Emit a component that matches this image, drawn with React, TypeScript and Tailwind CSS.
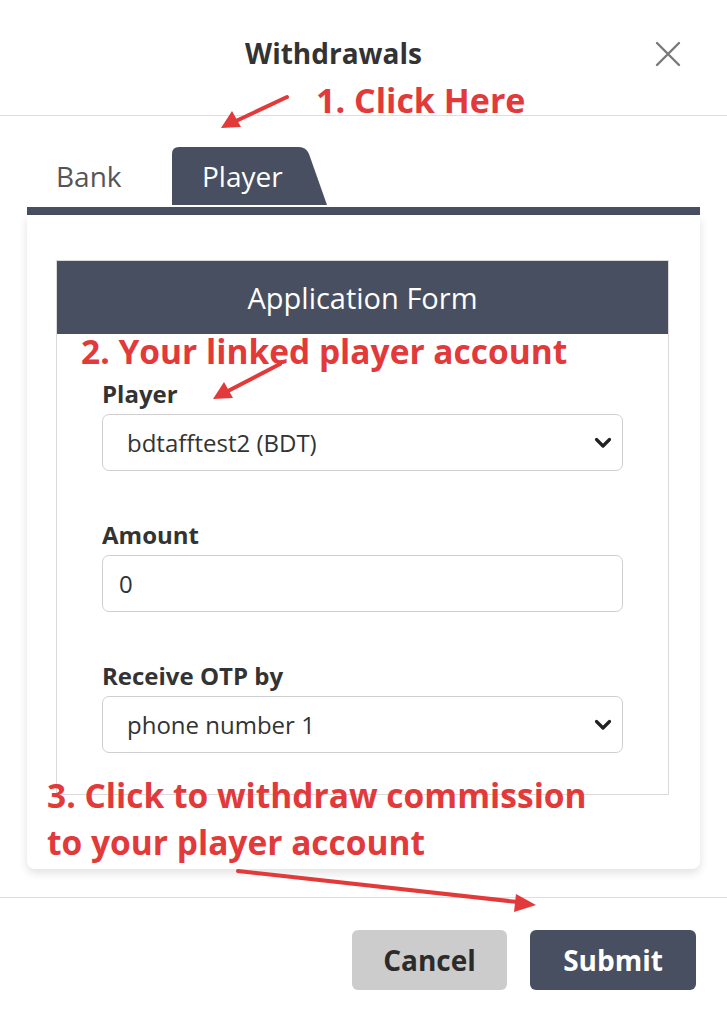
import React from 'react';

const RED = '#e23a3a';

const Chevron = () => (
  <svg width="18" height="12" viewBox="0 0 18 12" className="shrink-0">
    <path d="M2.5 2.5 L9 9 L15.5 2.5" fill="none" stroke="#222" strokeWidth="3.2" strokeLinecap="round" strokeLinejoin="round" />
  </svg>
);

const Field: React.FC<{ label: string; value: string; select?: boolean; pad?: string }> = ({ label, value, select, pad = 'pl-[24px]' }) => (
  <div className="flex flex-col">
    <label className="text-[24px] font-bold text-[#333] leading-[28px]">{label}</label>
    <div className={`mt-[6px] h-[57px] rounded-[7px] border border-[#cfcfcf] flex items-center justify-between pr-[10px] ${pad}`}>
      <span className="text-[24px] text-[#333]">{value}</span>
      {select && <Chevron />}
    </div>
  </div>
);

const Arrows = () => (
  <svg className="absolute inset-0 pointer-events-none" width="727" height="1024" viewBox="0 0 727 1024">
    <g stroke={RED} strokeWidth="4" strokeLinecap="round" fill={RED}>
      <line x1="287" y1="97" x2="236" y2="121" />
      <polygon points="221,128 232,111 241,127" stroke="none" />
      <line x1="280" y1="364" x2="228" y2="391" />
      <polygon points="213,399 224,382 233,398" stroke="none" />
      <line x1="238" y1="871" x2="518" y2="902" />
      <polygon points="536,905 516,894 514,912" stroke="none" />
    </g>
  </svg>
);

export default function App() {
  return (
    <div className="relative w-[727px] h-[1024px] bg-white overflow-hidden font-['Open_Sans',sans-serif] text-[#333]">
      {/* header */}
      <div className="relative h-[116px] border-b border-[#dedede] flex items-start justify-center pt-[34px] pr-[60px]">
        <h1 className="text-[28px] font-bold text-[#333] leading-[38px]">Withdrawals</h1>
        <button className="absolute right-[46px] top-[41px] text-[#777]">
          <svg width="26" height="26" viewBox="0 0 26 26">
            <path d="M2 2 L24 24 M24 2 L2 24" stroke="#7a7a7a" strokeWidth="2.4" strokeLinecap="round" />
          </svg>
        </button>
      </div>

      {/* tabs */}
      <div className="mx-[27px] mt-[31px]">
        <div className="flex items-end h-[58px]">
          <div className="w-[145px] h-full flex items-center pl-[29px] text-[28px] text-[#555]">Bank</div>
          <div className="w-[155px] h-full bg-[#484f60] [clip-path:path('M0,7Q0,0,7,0L127,0Q134,0,137,7L155,58L0,58Z')] flex items-center pl-[30px] text-[28px] text-white">
            Player
          </div>
        </div>
        <div className="mt-[2px] h-[8px] bg-[#484f60]" />

        {/* card */}
        <div className="rounded-b-[8px] shadow-[0_4px_10px_rgba(0,0,0,0.12)] pt-[45px] px-[29px] pb-[74px]">
          <div className="border border-[#dadada] mr-[2px]">
            <div className="h-[73px] bg-[#484f60] flex items-center justify-center text-white text-[29px]">Application Form</div>
            <div className="pt-[46px] px-[45px] pb-[41px] flex flex-col gap-[50px]">
              <Field label="Player" value="bdtafftest2 (BDT)" select />
              <Field label="Amount" value="0" pad="pl-[16px]" />
              <Field label="Receive OTP by" value="phone number 1" select />
            </div>
          </div>
        </div>
      </div>

      {/* footer */}
      <div className="mt-[28px] border-t border-[#dedede] flex justify-end gap-[23px] pt-[32px] pr-[31px]">
        <button className="w-[155px] h-[60px] rounded-[6px] bg-[#cccccc] text-[28px] font-bold text-[#2b2b2b]">Cancel</button>
        <button className="w-[166px] h-[60px] rounded-[6px] bg-[#484f60] text-[28px] font-bold text-white">Submit</button>
      </div>

      {/* annotations */}
      <div className="absolute left-[316px] top-[77px] text-[34px] font-bold leading-[46px]" style={{ color: RED }}>1. Click Here</div>
      <div className="absolute left-[81px] top-[328px] text-[33.5px] font-bold leading-[46px]" style={{ color: RED }}>2. Your linked player account</div>
      <div className="absolute left-[47px] top-[772px] text-[33.5px] font-bold leading-[47px]" style={{ color: RED }}>
        3. Click to withdraw commission
        <br />
        to your player account
      </div>
      <Arrows />
    </div>
  );
}
